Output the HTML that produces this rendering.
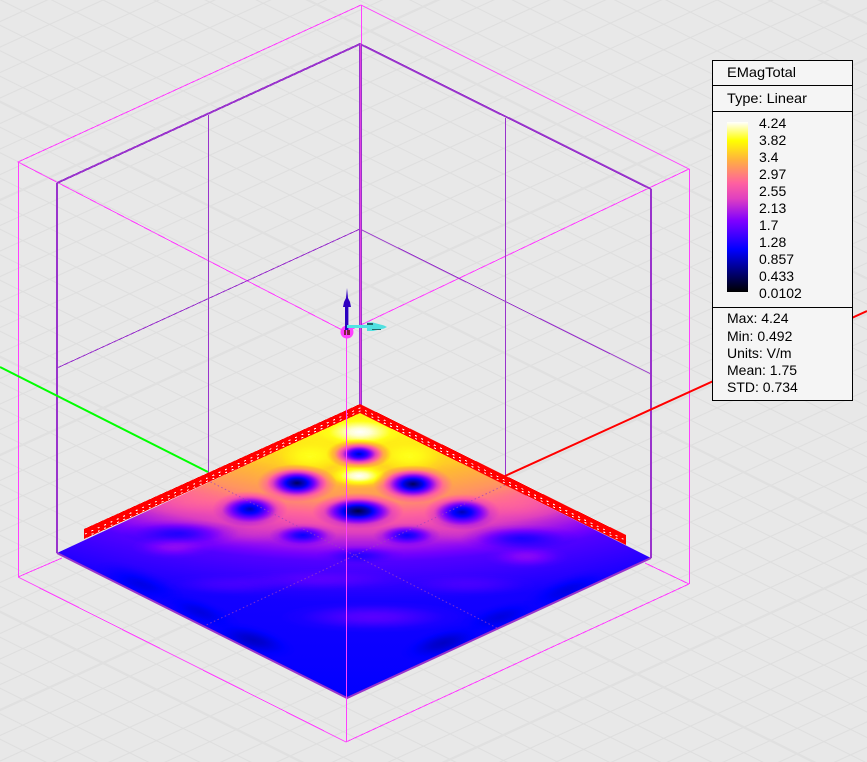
<!DOCTYPE html>
<html>
<head>
<meta charset="utf-8">
<style>
html,body{margin:0;padding:0;background:#e8e8e8;}
body{width:867px;height:762px;overflow:hidden;position:relative;}
svg{position:absolute;left:0;top:0;display:block;}
text{font-family:"Liberation Sans",sans-serif;font-size:14px;fill:#000;}
</style>
</head>
<body>
<svg width="867" height="762" viewBox="0 0 867 762" xmlns="http://www.w3.org/2000/svg">
<defs>
  <pattern id="grid" patternUnits="userSpaceOnUse" width="10" height="10" patternTransform="matrix(26.7 -12.2 26.7 13.3 103 153)">
    <path d="M1 0V10M2 0V10M3 0V10M4 0V10M5 0V10M6 0V10M7 0V10M8 0V10M9 0V10M0 1H10M0 2H10M0 3H10M0 4H10M0 5H10M0 6H10M0 7H10M0 8H10M0 9H10" stroke="#dedede" stroke-width="0.045" fill="none"/>
    <path d="M0 0V10M10 0V10M0 0H10M0 10H10" stroke="#e0e0e0" stroke-width="0.1" fill="none"/>
  </pattern>

  <filter id="cm" filterUnits="userSpaceOnUse" x="0" y="380" width="867" height="340" color-interpolation-filters="sRGB">
    <feComponentTransfer>
      <feFuncR type="table" tableValues="0 0 0 0 0 0 .14 .29 .44 .59 .73 .87 .95 1 1 1 1 1 1 1 1"/>
      <feFuncG type="table" tableValues="0 0 0 0 0 0 0 0 0 .06 .15 .25 .32 .4 .52 .63 .73 .89 1 1 1"/>
      <feFuncB type="table" tableValues="0 .2 .4 .6 .8 1 1 1 1 .94 .85 .75 .68 .6 .46 .32 .2 .09 .09 .55 1"/>
    </feComponentTransfer>
  </filter>

  <radialGradient id="base" gradientUnits="userSpaceOnUse" cx="0" cy="0" r="1" gradientTransform="translate(360 412) scale(800 288)">
    <stop offset="0" stop-color="#e0e0e0"/>
    <stop offset=".09" stop-color="#e0e0e0"/>
    <stop offset=".21" stop-color="#d1d1d1"/>
    <stop offset=".31" stop-color="#b8b8b8"/>
    <stop offset=".42" stop-color="#8c8c8c"/>
    <stop offset=".52" stop-color="#5c5c5c"/>
    <stop offset=".66" stop-color="#474747"/>
    <stop offset="1" stop-color="#404040"/>
  </radialGradient>
  <radialGradient id="d">
    <stop offset="0" stop-color="#000" stop-opacity="1"/>
    <stop offset=".25" stop-color="#000" stop-opacity=".8"/>
    <stop offset=".5" stop-color="#000" stop-opacity=".45"/>
    <stop offset=".75" stop-color="#000" stop-opacity=".13"/>
    <stop offset="1" stop-color="#000" stop-opacity="0"/>
  </radialGradient>
  <radialGradient id="l">
    <stop offset="0" stop-color="#fff" stop-opacity="1"/>
    <stop offset=".25" stop-color="#fff" stop-opacity=".85"/>
    <stop offset=".5" stop-color="#fff" stop-opacity=".5"/>
    <stop offset=".75" stop-color="#fff" stop-opacity=".15"/>
    <stop offset="1" stop-color="#fff" stop-opacity="0"/>
  </radialGradient>
  <clipPath id="floor"><polygon points="57,553 360,412 651,558 347,698"/></clipPath>
  <linearGradient id="scale" x1="0" y1="1" x2="0" y2="0">
    <stop offset="0" stop-color="#000000"/>
    <stop offset=".25" stop-color="#0000ff"/>
    <stop offset=".42" stop-color="#8000ff"/>
    <stop offset=".55" stop-color="#e040c0"/>
    <stop offset=".64" stop-color="#ff60a0"/>
    <stop offset=".775" stop-color="#ffb040"/>
    <stop offset=".89" stop-color="#ffff00"/>
    <stop offset="1" stop-color="#ffffff"/>
  </linearGradient>
</defs>

<rect width="867" height="762" fill="#e8e8e8"/>
<rect width="867" height="762" fill="url(#grid)"/>

<!-- outer pink box -->
<g fill="none" stroke="#ff40ff" stroke-width="1" shape-rendering="crispEdges">
  <path d="M361 5L18 162L346 332L689 169L361 5"/>
  <path d="M18.5 162V577M361.5 5V44M689.5 169V584"/>
  <path d="M18 577L346 742L689 584"/>
  <path d="M18 577L62 558M689 584L645 563"/>
</g>

<!-- inner purple box -->
<g fill="none" stroke="#9933cc" shape-rendering="crispEdges">
  <path d="M57 368L360 229L651 374" stroke-width="1"/>
  <path d="M208.5 115V474M505.5 118V478" stroke-width="1"/>
  <path d="M57 183L360 44L651 189" stroke-width="2"/>
  <path d="M57 183V553M651 189V558" stroke-width="2"/>
  <path d="M360.5 44V412" stroke-width="3"/>
</g>
<path d="M360.5 44V412" stroke="#e040e0" stroke-width="1" shape-rendering="crispEdges"/>

<!-- axes -->
<path d="M0 367L208 472" stroke="#00ff00" stroke-width="2" fill="none"/>
<path d="M505 476L867 311" stroke="#ff0000" stroke-width="2" fill="none"/>

<!-- heat map -->
<g clip-path="url(#floor)">
  <g filter="url(#cm)">
    <rect x="0" y="380" width="867" height="340" fill="url(#base)"/>
    <!-- peaks -->
    <ellipse cx="360" cy="432" rx="42" ry="15" fill="url(#l)"/>
    <ellipse cx="359" cy="476" rx="36" ry="13" fill="url(#l)"/>
    <ellipse cx="310" cy="457" rx="38" ry="18" fill="url(#l)" opacity=".4"/>
    <ellipse cx="410" cy="457" rx="38" ry="18" fill="url(#l)" opacity=".4"/>
    <ellipse cx="187" cy="503" rx="50" ry="16" fill="url(#l)" opacity=".07"/>
    <ellipse cx="523" cy="507" rx="50" ry="16" fill="url(#l)" opacity=".07"/>
    <ellipse cx="247" cy="535" rx="42" ry="12" fill="url(#l)" opacity=".05"/>
    <ellipse cx="462" cy="535" rx="42" ry="12" fill="url(#l)" opacity=".05"/>
    <ellipse cx="173" cy="547" rx="42" ry="12" fill="url(#l)" opacity=".13"/>
    <ellipse cx="527" cy="557" rx="42" ry="12" fill="url(#l)" opacity=".13"/>
    <ellipse cx="373" cy="617" rx="95" ry="16" fill="url(#l)" opacity=".13"/>
    <ellipse cx="320" cy="580" rx="90" ry="12" fill="url(#l)" opacity=".07"/>
    <ellipse cx="230" cy="585" rx="70" ry="12" fill="url(#l)" opacity=".06"/>
    <ellipse cx="470" cy="585" rx="70" ry="12" fill="url(#l)" opacity=".06"/>
    <!-- holes -->
    <ellipse cx="359" cy="454" rx="33" ry="15" fill="url(#d)" opacity=".78"/>
    <ellipse cx="297" cy="483" rx="40" ry="19" fill="url(#d)" opacity=".88"/>
    <ellipse cx="413" cy="484" rx="40" ry="19" fill="url(#d)" opacity=".88"/>
    <ellipse cx="358" cy="511" rx="46" ry="18" fill="url(#d)" opacity=".9"/>
    <ellipse cx="250" cy="509" rx="38" ry="18" fill="url(#d)" opacity=".72"/>
    <ellipse cx="462" cy="512" rx="38" ry="18" fill="url(#d)" opacity=".72"/>
    <ellipse cx="303" cy="535" rx="34" ry="12" fill="url(#d)" opacity=".5"/>
    <ellipse cx="407" cy="535" rx="34" ry="12" fill="url(#d)" opacity=".5"/>
    <ellipse cx="180" cy="533" rx="60" ry="14" fill="url(#d)" opacity=".33"/>
    <ellipse cx="520" cy="538" rx="60" ry="14" fill="url(#d)" opacity=".33"/>
    <ellipse cx="360" cy="555" rx="45" ry="10" fill="url(#d)" opacity=".25"/>
    <ellipse cx="140" cy="583" rx="50" ry="16" fill="url(#d)" opacity=".2" transform="rotate(20 140 583)"/>
    <ellipse cx="200" cy="612" rx="45" ry="14" fill="url(#d)" opacity=".2" transform="rotate(20 200 612)"/>
    <ellipse cx="253" cy="640" rx="45" ry="15" fill="url(#d)" opacity=".28" transform="rotate(15 253 640)"/>
    <ellipse cx="443" cy="643" rx="45" ry="15" fill="url(#d)" opacity=".28" transform="rotate(-15 443 643)"/>
    <ellipse cx="500" cy="617" rx="45" ry="14" fill="url(#d)" opacity=".2" transform="rotate(-15 500 617)"/>
    <ellipse cx="567" cy="590" rx="50" ry="15" fill="url(#d)" opacity=".2" transform="rotate(-20 567 590)"/>
  </g>
</g>

<!-- dotted mid lines on floor -->
<g fill="none" stroke="#a040c0" stroke-width="1" stroke-dasharray="1.5 2.5" opacity=".75">
  <path d="M207 480L497 628"/>
  <path d="M505 485L202 627"/>
</g>
<!-- floor edges -->
<path d="M57 553L347 698L651 558" fill="none" stroke="#9933cc" stroke-width="2"/>

<!-- red hatched band -->
<polygon points="84,529 360,404 626,535 626,545 360,413 84,539" fill="#ff0000" shape-rendering="crispEdges"/>
<g fill="none" stroke="#ffffff" stroke-width="1" shape-rendering="crispEdges">
  <path d="M85 534L360 408L625 540" stroke-dasharray="2 5"/>
  <path d="M88 536L360 411L622 541" stroke-dasharray="2 5" stroke-dashoffset="3"/>
</g>

<!-- pink vertical over floor -->
<path d="M346.5 332V742" stroke="#ff40ff" stroke-width="1" shape-rendering="crispEdges"/>

<!-- origin widget -->
<circle cx="347" cy="332" r="6.5" fill="#ff40ff"/>
<path d="M344 330h2v5h-2zM347 330h3v5h-3z" fill="#802040"/>
<rect x="345" y="305" width="3.4" height="25" fill="#2a00c0"/>
<path d="M347 288L348 298L350 302L351 307H343L344 302L346 298Z" fill="#3000c0"/>
<rect x="347" y="325" width="25" height="3" fill="#50e4e4"/>
<path d="M367 322.5H373L384 325.5L387 327L384 328.5L373 331H367V328H370V325.5H367Z" fill="#50e0e0"/>
<path d="M367 323H373V325H367ZM372 329H381V330H372Z" fill="#206868"/>

<!-- legend -->
<rect x="712.5" y="60.5" width="140" height="340" fill="#f5f5f5" stroke="#000" stroke-width="1" shape-rendering="crispEdges"/>
<path d="M712 85.5H853M712 111.5H853M712 307.5H853" stroke="#000" stroke-width="1" shape-rendering="crispEdges"/>
<rect x="727" y="122" width="21" height="170" fill="url(#scale)"/>
<text x="727" y="77" textLength="69" lengthAdjust="spacingAndGlyphs">EMagTotal</text>
<text x="727" y="103" textLength="80" lengthAdjust="spacingAndGlyphs">Type: Linear</text>
<text x="759" y="128">4.24</text>
<text x="759" y="145">3.82</text>
<text x="759" y="162">3.4</text>
<text x="759" y="179">2.97</text>
<text x="759" y="196">2.55</text>
<text x="759" y="213">2.13</text>
<text x="759" y="230">1.7</text>
<text x="759" y="247">1.28</text>
<text x="759" y="264">0.857</text>
<text x="759" y="281">0.433</text>
<text x="759" y="298">0.0102</text>
<text x="727" y="323">Max: 4.24</text>
<text x="727" y="341">Min: 0.492</text>
<text x="727" y="358">Units: V/m</text>
<text x="727" y="375">Mean: 1.75</text>
<text x="727" y="392">STD: 0.734</text>
</svg>
</body>
</html>
